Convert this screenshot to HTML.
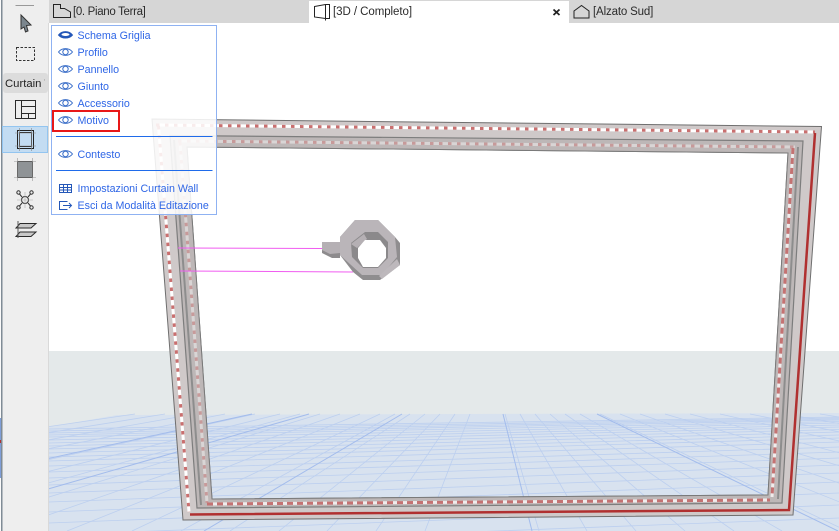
<!DOCTYPE html>
<html><head><meta charset="utf-8"><style>
html,body{margin:0;padding:0;background:#fff}
#p{position:relative;width:839px;height:531px;overflow:hidden;font-family:"Liberation Sans",sans-serif}
.a{position:absolute}
.m{position:absolute;left:77.500px;color:#2f66e6;font-size:10.700px;line-height:14px;white-space:nowrap}
.t{position:absolute;top:5px;color:#2b2b2b;font-size:11.500px;line-height:14px;white-space:nowrap}
svg{position:absolute;left:0;top:0}
</style></head><body><div id="p">
<svg width="839" height="531" viewBox="0 0 839 531">
<rect x="49" y="351" width="790" height="85" fill="#e4e9ea"/>
<polygon points="49,427 117,415 839,413 839,531 49,531" fill="#d8e2ef"/>
<g stroke="#bccfef" stroke-width="0.800" fill="none">
<path d="M49 429L839 417M49 431L839 418M49 433L839 419M49 435L839 420M49 437L839 421.500M49 440L839 423M49 443L839 425M49 446L839 427M49 449L839 429.500M49 453L839 432M49 457L839 435M49 461L839 438M49 466L839 442M49 472L839 447M49 478L839 452M49 485L839 458M49 493L839 465M49 502L839 473M49 512L839 482M49 523L839 493M49 535L839 505M49 548L839 518"/>
<path d="M470 414L425 531M455 414L376 531M440 414L327 531M425 414L279 531M410 414L230 531M395 414L181 531M380 414L132 531M360 414L67 531M340 414L2 531M320 414L-62 531M300 414L-127 531M280 414L-192 531M255 414L-274 531M225 414L-371 531M195 414L-469 531M165 414L-566 531M135 414L-664 531"/>
<path d="M505 414L539 531M520 414L587 531M535 414L636 531M550 414L685 531M565 414L734 531M580 414L782 531M600 414L847 531M620 414L912 531M640 414L977 531M665 414L1059 531M690 414L1140 531M720 414L1237 531M750 414L1335 531M785 414L1449 531M820 414L1562 531"/>
</g>
<g stroke="#a3bcec" stroke-width="1" fill="none">
<path d="M503 414L532 531M597 414L838 531M309 414L-98 531M252 414L-283 531M402 414L204 531"/>
</g>
<path fill-rule="evenodd" d="M152 119L821.500 126.500L793 515L183 520ZM187 147L788 153L768 495L212 499Z" fill="#cfc9c9" stroke="#6f6f6f" stroke-width="1"/>
<path fill-rule="evenodd" d="M170 135.500L803 141L782 503L197 508ZM187 147L788 153L768 495L212 499Z" fill="#bdb7b7"/>
<path d="M170 135.500L803 141L782 503L197 508Z" fill="none" stroke="#7d7d7d" stroke-width="1.200"/>
<path d="M187 147L788 153L768 495L212 499Z" fill="none" stroke="#7a7a7a" stroke-width="1"/>
<path d="M798 147L778 499M174 140L201 505" fill="none" stroke="#8d8d8d" stroke-width="2"/>
<path d="M158.500 126L189 512M156 125L815 132" fill="none" stroke="#fff" stroke-width="3"/>
<path d="M158.500 126L189 512M156 125L815 132" fill="none" stroke="#c96f6f" stroke-width="3" stroke-dasharray="3.500 5.500"/>
<path d="M180 142L207 503M178 141L795 147" fill="none" stroke="#d9d5d5" stroke-width="3"/>
<path d="M180 142L207 503M178 141L795 147" fill="none" stroke="#c79a9a" stroke-width="3" stroke-dasharray="3.500 5.500"/>
<path d="M793 148L772 497M207 504L770 500" fill="none" stroke="#f0ecec" stroke-width="3"/>
<path d="M793 148L772 497M207 504L770 500" fill="none" stroke="#c47272" stroke-width="3" stroke-dasharray="6 4"/>
<path d="M815 133L789 510L190 514.500" fill="none" stroke="#b03030" stroke-width="2.500"/>
<path d="M178 248L322 248.500" stroke="#f05cf0" stroke-width="1" fill="none"/>
<path d="M180 271L353 272" stroke="#f05cf0" stroke-width="1" fill="none"/>
<polygon points="322,242 340,242 340,258 332,258 322,253" fill="#8d8b8d"/>
<polygon points="322,242 340,242 340,253 330,254 322,250" fill="#b5b0b4"/>
<polygon points="355,220 378,220 395,237 400,243 400,265 380,280 363,280 353,272 340,255 340,237" fill="#8f8d8f"/>
<polygon points="355,220 378,220 395,237 397,257 382,275 362,275 340,255 340,237" fill="#bab5b9"/>
<polygon points="397,259 400,265 382,279 379,276" fill="#bdb8bc"/>
<polygon points="365,232 378,232 388,242 388,258 378,268 363,268 352,257 351,243" fill="#8b898b"/>
<polygon points="351,244 364,234 367,239 357,248" fill="#b5b0b4"/>
<polygon points="365,240 380,240 386,248 386,258 378,267 363,267 358,258 358,248" fill="#fff"/>
<rect x="0" y="0" width="49" height="531" fill="#eeeeee"/>
<rect x="0" y="0" width="1" height="531" fill="#fafafa"/>
<rect x="1" y="0" width="1.500" height="531" fill="#7f8b95"/>
<rect x="0" y="418" width="1" height="60" fill="#7f9ed8"/>
<rect x="0" y="440" width="1" height="3" fill="#b03030"/>
<rect x="48" y="23" width="1" height="508" fill="#d9d9d9"/>
<rect x="49" y="0" width="790" height="23" fill="#d6d6d6"/>
<rect x="309" y="1" width="260" height="22" fill="#fff"/>
<path d="M53.500 17.500V4.500H60.500V8.500H64.500L70.500 12V17.500Z" fill="none" stroke="#222" stroke-width="1"/>
<path d="M314.500 6.500L325.500 4.500L329.500 4.500V18.500H325.500L314.500 17ZM325.500 4.500V20.500" fill="none" stroke="#222" stroke-width="1"/>
<path d="M574 18V11L581.500 5.500L589 11V18Z" fill="none" stroke="#222" stroke-width="1"/>
<path d="M553.500 9.500L559.500 15M559.500 9.500L553.500 15" stroke="#222" stroke-width="1.800" fill="none"/>
<path d="M15.500 5.500H34" stroke="#999" fill="none"/>
<polygon points="21,15 31,25 26.500,25.500 28,31 25.500,32 24,27 21,29" fill="#7b868e" stroke="#333" stroke-width="1"/>
<rect x="16.500" y="47.500" width="18" height="13" fill="none" stroke="#333" stroke-dasharray="2.500 1.500"/>
<rect x="3" y="73" width="45" height="20" rx="3" fill="#dcdcdc"/>
<path d="M15.500 100.500H35.500V118.500H15.500ZM21.500 100.500V118.500M21.500 106.500H35.500M21.500 113.500H35.500M28.500 113.500V118.500" fill="none" stroke="#2a2a2a"/>
<rect x="2.500" y="126.500" width="45" height="26" fill="#c3dcf2" stroke="#93c5f0"/>
<path d="M17.500 130.500H33.500V148.500H17.500ZM19.500 132.500H31.500V146.500H19.500Z" fill="none" stroke="#222"/>
<path d="M15 133H36M15 146H36M19.500 128V151M31.500 128V151" stroke="#888" fill="none" stroke-width="0.600"/>
<rect x="17.500" y="161.500" width="15" height="16" fill="#8f9396" stroke="#222"/>
<path d="M14 161.500H36M14 177.500H36M17.500 158V181M32.500 158V181" stroke="#999" stroke-width="0.600" fill="none"/>
<g fill="none" stroke="#333"><circle cx="25" cy="200" r="3.500"/><path d="M22 197L19.500 194M28 197L30.500 194M22 203L19.500 206M28 203L30.500 206"/><circle cx="18.500" cy="192.500" r="1.700"/><circle cx="31.500" cy="192.500" r="1.700"/><circle cx="18.500" cy="207.500" r="1.700"/><circle cx="31.500" cy="207.500" r="1.700"/><path d="M25 192V208M17 200H33" stroke="#aaa" stroke-width="0.600"/></g>
<path d="M20 223.500H36L31 228H16ZM20 232H36L31 236.500H16Z" fill="#c8c8c8" stroke="#2a2a2a"/>
<path d="M18 221V238" stroke="#555" fill="none"/>
</svg>
<div class="a" style="left:5px;top:77px;width:40px;overflow:hidden;font-size:11.300px;line-height:14px;color:#222;white-space:nowrap">Curtain Wall</div>
<div class="t" style="left:73px;letter-spacing:-.33px">[0. Piano Terra]</div>
<div class="t" style="left:333px;letter-spacing:-.06px">[3D / Completo]</div>
<div class="t" style="left:593px;letter-spacing:-.15px">[Alzato Sud]</div>
<div class="a" style="left:51px;top:25px;width:164px;height:188px;background:rgba(255,255,255,.87);border:1px solid #8fb2f2"></div>
<svg width="839" height="531" viewBox="0 0 839 531">
<g fill="none" stroke="#3a6ec8" stroke-width="1">
<path d="M58.500 35C62 30.500 69 30.500 72.500 35C69 39 62 39 58.500 35Z" fill="#2457b8" stroke="#2457b8"/>
<ellipse cx="65.500" cy="34.500" rx="4" ry="1.500" fill="#fff" stroke="none"/>
<path d="M58.500 52C62 47.500 69 47.500 72.500 52C69 56.500 62 56.500 58.500 52Z"/><circle cx="65.500" cy="52" r="2.700"/>
<path d="M58.500 69C62 64.500 69 64.500 72.500 69C69 73.500 62 73.500 58.500 69Z"/><circle cx="65.500" cy="69" r="2.700"/>
<path d="M58.500 86C62 81.500 69 81.500 72.500 86C69 90.500 62 90.500 58.500 86Z"/><circle cx="65.500" cy="86" r="2.700"/>
<path d="M58.500 103C62 98.500 69 98.500 72.500 103C69 107.500 62 107.500 58.500 103Z"/><circle cx="65.500" cy="103" r="2.700"/>
<path d="M58.500 120C62 115.500 69 115.500 72.500 120C69 124.500 62 124.500 58.500 120Z"/><circle cx="65.500" cy="120" r="2.700"/>
<path d="M58.500 154C62 149.500 69 149.500 72.500 154C69 158.500 62 158.500 58.500 154Z"/><circle cx="65.500" cy="154" r="2.700"/>
<path d="M59.500 184.500H71.500V192.500H59.500ZM59.500 187.500H71.500M59.500 190H71.500M63.500 184.500V192.500M67.500 184.500V192.500" stroke="#2457b8"/>
<path d="M67.500 201.500H59.500V209.500H67.500M63 205.500H71.500M69 203L71.500 205.500L69 208" stroke="#2457b8"/>
</g>
<path d="M56 136.500H212.500M56 170.500H212.500" stroke="#1f6bea" stroke-width="1" fill="none"/>
<rect x="53" y="111" width="66" height="20" fill="none" stroke="#e81818" stroke-width="2"/>
</svg>
<div class="m" style="top:29px">Schema Griglia</div>
<div class="m" style="top:46px">Profilo</div>
<div class="m" style="top:63px">Pannello</div>
<div class="m" style="top:80px">Giunto</div>
<div class="m" style="top:97px">Accessorio</div>
<div class="m" style="top:114px">Motivo</div>
<div class="m" style="top:148px">Contesto</div>
<div class="m" style="top:182px">Impostazioni Curtain Wall</div>
<div class="m" style="top:199px">Esci da Modalità Editazione</div>
</div></body></html>
